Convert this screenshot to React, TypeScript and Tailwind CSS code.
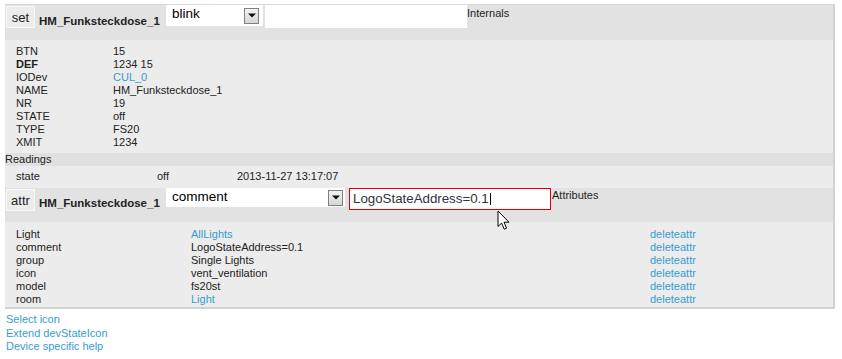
import React from "react";

const internals: [string, string, boolean?, boolean?][] = [
  ["BTN", "15"],
  ["DEF", "1234 15", true],
  ["IODev", "CUL_0", false, true],
  ["NAME", "HM_Funksteckdose_1"],
  ["NR", "19"],
  ["STATE", "off"],
  ["TYPE", "FS20"],
  ["XMIT", "1234"],
];

const attributes: [string, string, boolean?][] = [
  ["Light", "AllLights", true],
  ["comment", "LogoStateAddress=0.1"],
  ["group", "Single Lights"],
  ["icon", "vent_ventilation"],
  ["model", "fs20st"],
  ["room", "Light", true],
];

function Arrow() {
  return (
    <div className="flex h-[16px] w-[15px] items-center justify-center border border-[#7f7f7f] bg-gradient-to-b from-[#f4f4f4] to-[#d6d6d6]">
      <svg width="8" height="5" viewBox="0 0 8 5">
        <path d="M0 0.5h8L4 4.5z" fill="#111" />
      </svg>
    </div>
  );
}

function MouseCursor() {
  return (
    <svg className="absolute left-[497px] top-[210px]" width="14" height="21" viewBox="0 0 14 21">
      <path
        d="M1 1v15.5l3.6-3.4 2.6 6.1 2.4-1-2.6-6h5z"
        fill="#fff"
        stroke="#000"
        strokeWidth="1"
        strokeLinejoin="round"
      />
    </svg>
  );
}

export default function App() {
  return (
    <div className="relative min-h-[359px] bg-white pl-[5px] pt-[4px] font-['Liberation_Sans',Arial,sans-serif] text-[11px] leading-[13px] text-[#222]">
      <div className="w-[830px] border-t border-b-2 border-r-2 border-t-[#d8d8d8] border-b-[#d2d2d2] border-r-[#d2d2d2] bg-[#ececec]">
        {/* set row */}
        <div className="flex h-[35px] items-start bg-[#e2e2e2]">
          <div className="ml-px mt-px flex h-[22px] w-[29px] items-center justify-center border border-[#f7f7f7] bg-[#ececec] text-[13px] text-[#222]">
            set
          </div>
          <div className="mt-[9px] w-[131px] pl-[4px] text-[11.5px] font-bold leading-[14px]">
            HM_Funksteckdose_1
          </div>
          <div className="flex h-[21px] w-[97px] items-center justify-between bg-white pl-[6px] pr-[4px] text-[13.5px] leading-[18px] text-black">
            <span className="-mt-[3px]">blink</span>
            <Arrow />
          </div>
          <div className="ml-[2px] h-[23px] w-[202px] bg-white" />
          <div className="mt-[2px] leading-[13px]">Internals</div>
        </div>

        {/* internals */}
        <div className="pb-[4px] pl-[11px] pt-[5px]">
          {internals.map(([k, v, bold, link]) => (
            <div key={k} className="grid h-[13px] grid-cols-[97px_1fr]">
              <span className={bold ? "font-bold" : ""}>{k}</span>
              <span className={link ? "text-[#369dcf]" : ""}>{v}</span>
            </div>
          ))}
        </div>

        {/* readings */}
        <div className="h-[13px] bg-[#e0e0e0] leading-[12px]">Readings</div>
        <div className="grid h-[22px] grid-cols-[141px_80px_1fr] pl-[11px] pt-[4px]">
          <span>state</span>
          <span>off</span>
          <span>2013-11-27 13:17:07</span>
        </div>

        {/* attr row */}
        <div className="flex h-[34px] items-start bg-[#e2e2e2]">
          <div className="ml-px mt-px flex h-[22px] w-[29px] items-center justify-center border border-[#f7f7f7] bg-[#ececec] text-[13px] text-[#222]">
            attr
          </div>
          <div className="mt-[8px] w-[131px] pl-[4px] text-[11.5px] font-bold leading-[14px]">
            HM_Funksteckdose_1
          </div>
          <div className="flex h-[19px] w-[179px] items-center justify-between bg-white pl-[6px] pr-[2px] text-[13.5px] leading-[18px] text-black">
            <span className="-mt-[2px]">comment</span>
            <Arrow />
          </div>
          <div className="ml-[4px] flex h-[22px] w-[202px] items-center border border-[#e60000] bg-white pl-[3px] text-[13.3px] leading-[16px] text-[#2e3440]">
            <span>LogoStateAddress=0.1</span>
            <span className="ml-px h-[12px] w-px bg-black" />
          </div>
          <div className="ml-px mt-px leading-[13px]">Attributes</div>
        </div>

        {/* attributes */}
        <div className="pb-px pl-[11px] pt-[6px]">
          {attributes.map(([k, v, link]) => (
            <div key={k} className="grid h-[13px] grid-cols-[175px_459px_1fr]">
              <span>{k}</span>
              <span className={link ? "text-[#369dcf]" : ""}>{v}</span>
              <span className="text-[#369dcf]">deleteattr</span>
            </div>
          ))}
        </div>
      </div>

      <div className="flex flex-col pl-px pt-[4px] leading-[13.5px] text-[#369dcf]">
        <span>Select icon</span>
        <span>Extend devStateIcon</span>
        <span>Device specific help</span>
      </div>

      <MouseCursor />
    </div>
  );
}
